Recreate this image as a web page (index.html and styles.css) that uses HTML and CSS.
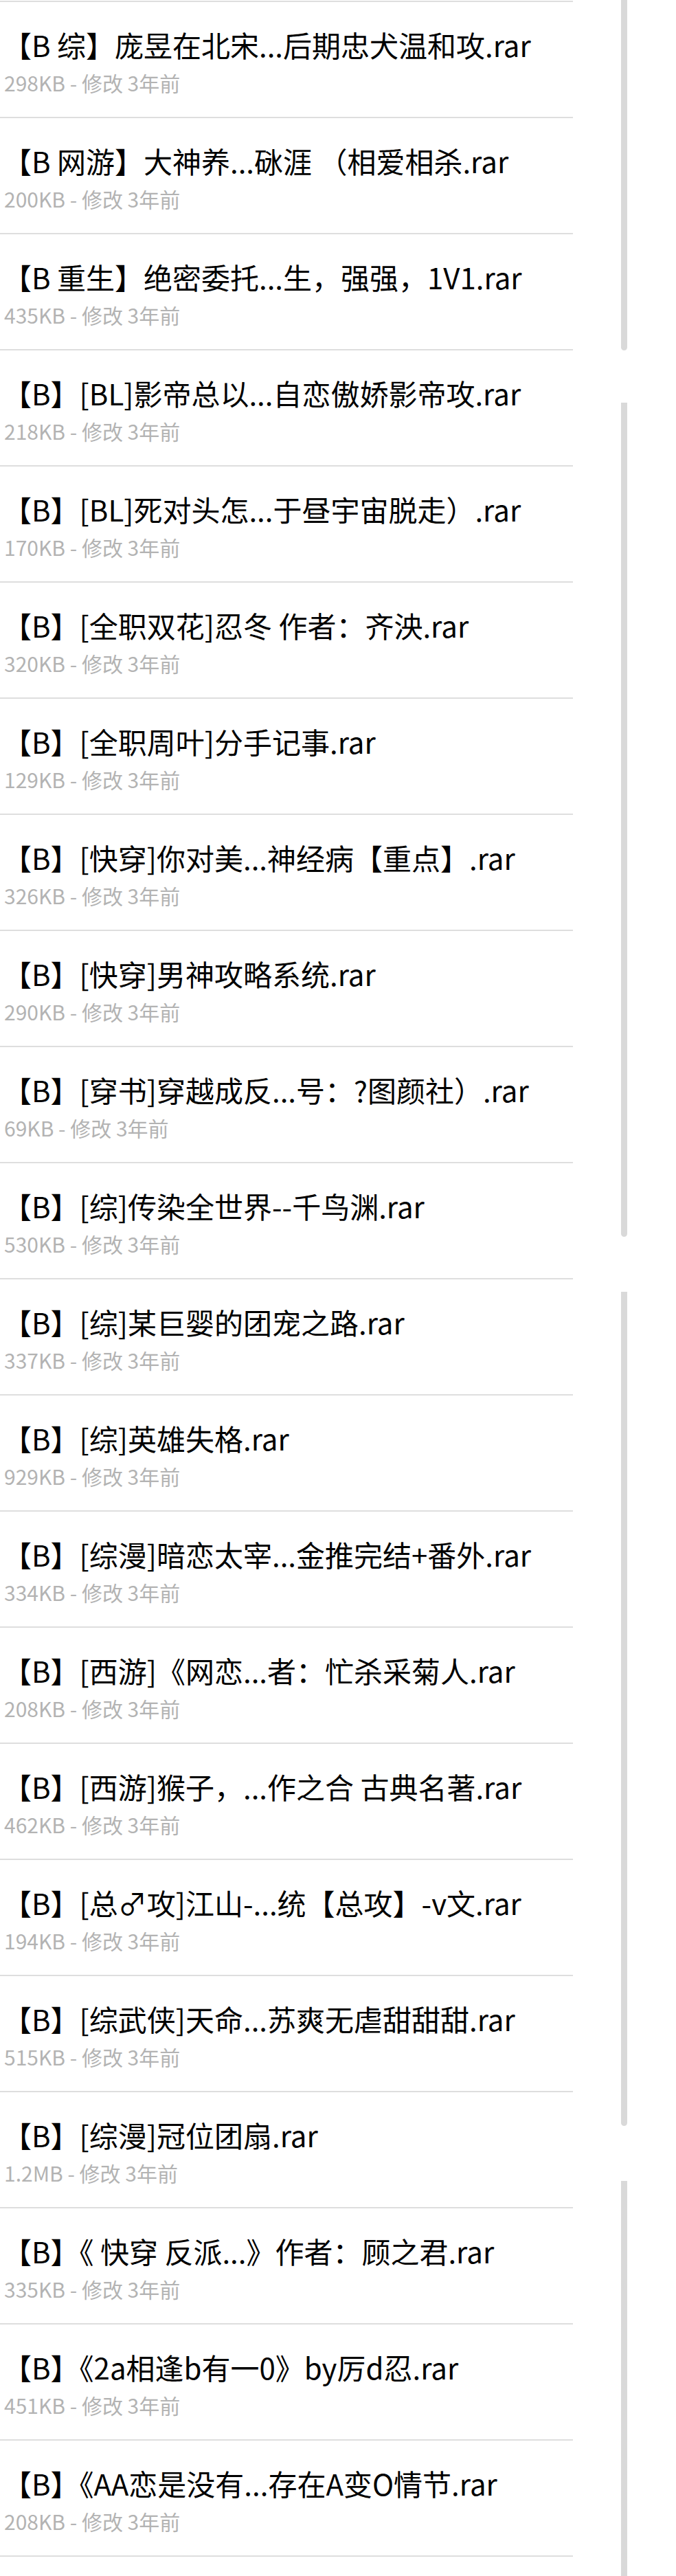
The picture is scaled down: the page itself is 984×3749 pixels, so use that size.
FILE: index.html
```html
<!DOCTYPE html>
<html lang="zh-CN">
<head>
<meta charset="utf-8">
<title>文件列表</title>
<link rel="stylesheet" href="styles.css">
</head>
<body>
<div class="page">
  <ul class="file-list">
    <li class="file"><div class="name">【B 综】庞昱在北宋...后期忠犬温和攻.rar</div><div class="meta">298KB - 修改 3年前</div></li>
    <li class="file"><div class="name">【B 网游】大神养...砯涯 （相爱相杀.rar</div><div class="meta">200KB - 修改 3年前</div></li>
    <li class="file"><div class="name">【B 重生】绝密委托...生，强强，1V1.rar</div><div class="meta">435KB - 修改 3年前</div></li>
    <li class="file"><div class="name">【B】[BL]影帝总以...自恋傲娇影帝攻.rar</div><div class="meta">218KB - 修改 3年前</div></li>
    <li class="file"><div class="name">【B】[BL]死对头怎...于昼宇宙脱走）.rar</div><div class="meta">170KB - 修改 3年前</div></li>
    <li class="file"><div class="name">【B】[全职双花]忍冬 作者：齐泱.rar</div><div class="meta">320KB - 修改 3年前</div></li>
    <li class="file"><div class="name">【B】[全职周叶]分手记事.rar</div><div class="meta">129KB - 修改 3年前</div></li>
    <li class="file"><div class="name">【B】[快穿]你对美...神经病【重点】.rar</div><div class="meta">326KB - 修改 3年前</div></li>
    <li class="file"><div class="name">【B】[快穿]男神攻略系统.rar</div><div class="meta">290KB - 修改 3年前</div></li>
    <li class="file"><div class="name">【B】[穿书]穿越成反...号：?图颜社）.rar</div><div class="meta">69KB - 修改 3年前</div></li>
    <li class="file"><div class="name">【B】[综]传染全世界--千鸟渊.rar</div><div class="meta">530KB - 修改 3年前</div></li>
    <li class="file"><div class="name">【B】[综]某巨婴的团宠之路.rar</div><div class="meta">337KB - 修改 3年前</div></li>
    <li class="file"><div class="name">【B】[综]英雄失格.rar</div><div class="meta">929KB - 修改 3年前</div></li>
    <li class="file"><div class="name">【B】[综漫]暗恋太宰...金推完结+番外.rar</div><div class="meta">334KB - 修改 3年前</div></li>
    <li class="file"><div class="name">【B】[西游]《网恋...者：忙杀采菊人.rar</div><div class="meta">208KB - 修改 3年前</div></li>
    <li class="file"><div class="name">【B】[西游]猴子，...作之合 古典名著.rar</div><div class="meta">462KB - 修改 3年前</div></li>
    <li class="file"><div class="name">【B】[总♂攻]江山-...统【总攻】-v文.rar</div><div class="meta">194KB - 修改 3年前</div></li>
    <li class="file"><div class="name">【B】[综武侠]天命...苏爽无虐甜甜甜.rar</div><div class="meta">515KB - 修改 3年前</div></li>
    <li class="file"><div class="name">【B】[综漫]冠位团扇.rar</div><div class="meta">1.2MB - 修改 3年前</div></li>
    <li class="file"><div class="name">【B】《 快穿 反派...》作者：顾之君.rar</div><div class="meta">335KB - 修改 3年前</div></li>
    <li class="file"><div class="name">【B】《2a相逢b有一0》by厉d忍.rar</div><div class="meta">451KB - 修改 3年前</div></li>
    <li class="file"><div class="name">【B】《AA恋是没有...存在A变O情节.rar</div><div class="meta">208KB - 修改 3年前</div></li>
  </ul>
  <div class="rail" aria-hidden="true">
    <span class="thumb thumb-a"></span>
    <span class="thumb thumb-b"></span>
    <span class="thumb thumb-c"></span>
    <span class="thumb thumb-d"></span>
  </div>
</div>
</body>
</html>
```
FILE: styles.css
```css
html, body {
  margin: 0;
  padding: 0;
  background: #ffffff;
}

body {
  font-family: "Noto Sans CJK SC", "Noto Sans", sans-serif;
  color: #000000;
}

.page {
  display: flex;
  align-items: flex-start;
  min-height: 3749px;
}

.file-list {
  list-style: none;
  margin: 0;
  padding: 1px 0 0 0;
  width: 834px;
  flex: none;
}

.file-list::before {
  content: "";
  display: block;
  height: 2px;
  background: #dedede;
}

.file {
  box-sizing: border-box;
  height: 169px;
  border-bottom: 2px solid #dedede;
  padding: 33px 0 0 4px;
  white-space: nowrap;
}

.file .name {
  font-size: 42px;
  line-height: 58px;
  height: 58px;
  color: #000000;
}

.file .meta {
  margin-top: 6px;
  font-size: 30px;
  line-height: 40px;
  color: #b3b3b3;
  padding-left: 2px;
}

.rail {
  margin-left: 70px;
  width: 9px;
  flex: none;
  display: flex;
  flex-direction: column;
}

.thumb {
  display: block;
  width: 9px;
  background: #d9d9d9;
  border-radius: 0 0 5px 5px;
}

.thumb-a { height: 510px; }
.thumb-b { height: 1214px; margin-top: 76px; }
.thumb-c { height: 1214px; margin-top: 80px; }
.thumb-d { height: 575px; margin-top: 80px; border-radius: 0; }
```
